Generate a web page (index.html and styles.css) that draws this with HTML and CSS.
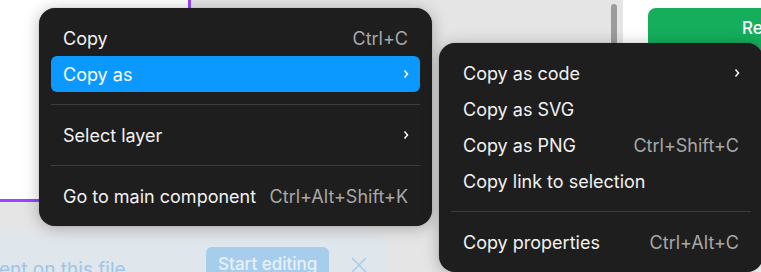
FILE: index.html
```html
<!DOCTYPE html>
<html lang="en">
<head>
<meta charset="utf-8">
<title>Context menu</title>
<link rel="stylesheet" href="styles.css">
</head>
<body>
<div class="app">
  <div class="stage">
    <div class="frame"></div>
    <div class="scroll-thumb"></div>
  </div>
  <aside class="panel">
    <button class="btn-green">Request</button>
  </aside>
</div>

<div class="toast">
  <span class="toast-text">ent on this file.</span>
  <button class="toast-btn">Start editing</button>
  <svg class="toast-close" width="16" height="16" viewBox="0 0 16 16"><path d="M1 1 L15 15 M15 1 L1 15" stroke="#a9cdea" stroke-width="1.6" fill="none"/></svg>
</div>

<div class="menu menu-main">
  <div class="item"><span>Copy</span><span class="sc">Ctrl+C</span></div>
  <div class="item active"><span>Copy as</span><svg class="chev" width="6" height="10" viewBox="0 0 6 10"><path d="M1.5 1.5 L4.5 5 L1.5 8.5" stroke="#fff" stroke-width="1.5" fill="none"/></svg></div>
  <div class="sep"></div>
  <div class="item"><span>Select layer</span><svg class="chev" width="6" height="10" viewBox="0 0 6 10"><path d="M1.5 1.5 L4.5 5 L1.5 8.5" stroke="#fff" stroke-width="1.5" fill="none"/></svg></div>
  <div class="sep"></div>
  <div class="item"><span>Go to main component</span><span class="sc">Ctrl+Alt+Shift+K</span></div>
</div>

<div class="menu menu-sub">
  <div class="item"><span>Copy as code</span><svg class="chev" width="6" height="10" viewBox="0 0 6 10"><path d="M1.5 1.5 L4.5 5 L1.5 8.5" stroke="#fff" stroke-width="1.5" fill="none"/></svg></div>
  <div class="item"><span>Copy as SVG</span></div>
  <div class="item"><span>Copy as PNG</span><span class="sc">Ctrl+Shift+C</span></div>
  <div class="item"><span>Copy link to selection</span></div>
  <div class="sep"></div>
  <div class="item"><span>Copy properties</span><span class="sc">Ctrl+Alt+C</span></div>
</div>
</body>
</html>
```

FILE: styles.css
```css
* { box-sizing: border-box; }
html, body {
  margin: 0;
  width: 761px;
  height: 272px;
  overflow: hidden;
  font-family: Inter, "Noto Sans", sans-serif;
}
body { position: relative; background: #e5e5e5; }

.app {
  display: flex;
  height: 272px;
}
.stage {
  position: relative;
  flex: none;
  width: 623px;
  background: #e5e5e5;
}
.frame {
  width: 191px;
  height: 202px;
  background: #fff;
  border-right: 3px solid #9747ff;
  border-bottom: 3px solid #9747ff;
}
.scroll-thumb {
  position: absolute;
  left: 611px;
  top: 4px;
  width: 6px;
  height: 60px;
  border-radius: 3px;
  background: #9c9c9c;
}
.panel {
  flex: 1;
  min-width: 0;
  overflow: hidden;
  background: #fff;
  padding: 8px 0 0 25px;
}
.btn-green {
  display: block;
  width: 200px;
  height: 48px;
  border: 0;
  border-radius: 8px;
  background: #14ae5c;
  color: #fff;
  font: 500 17px Inter, sans-serif;
  text-align: left;
  padding: 0 0 8px 94px;
  white-space: nowrap;
}

.toast {
  position: absolute;
  left: 0;
  top: 233px;
  width: 387px;
  height: 70px;
  background: #dfe6ec;
  border-radius: 0 12px 0 0;
  display: flex;
  align-items: flex-start;
  padding-top: 14px;
}
.toast-text {
  margin-left: -1px;
  margin-top: 11px;
  color: #9fc5e6;
  font-size: 19px;
  white-space: nowrap;
}
.toast-btn {
  margin-left: 75px;
  height: 40px;
  padding: 0 12px 6px;
  border: 0;
  border-radius: 6px;
  background: #a7cdec;
  color: #e8f1f9;
  font: 500 17px Inter, sans-serif;
  white-space: nowrap;
}
.toast-close { margin: 10px 0 0 22px; }

.menu {
  position: absolute;
  background: #1e1e1e;
  border-radius: 16px;
  padding: 12px;
  box-shadow: 0 2px 16px rgba(0,0,0,0.28), 0 0 1px rgba(0,0,0,0.4);
  color: #f2f2f2;
  font-size: 18px;
}
.menu-main { left: 39px; top: 8px; width: 393px; }
.menu-sub { left: 439px; top: 43px; width: 324px; }
.item {
  height: 36px;
  padding: 0 12px;
  display: flex;
  align-items: center;
  justify-content: space-between;
  border-radius: 6px;
  white-space: nowrap;
}
.item.active { background: #0c99ff; color: #fff; }
.sc { color: #a8a8a8; }
.chev { margin-right: -1px; }
.sep {
  height: 1px;
  margin: 12px 0;
  background: #3d3d3d;
}
```
